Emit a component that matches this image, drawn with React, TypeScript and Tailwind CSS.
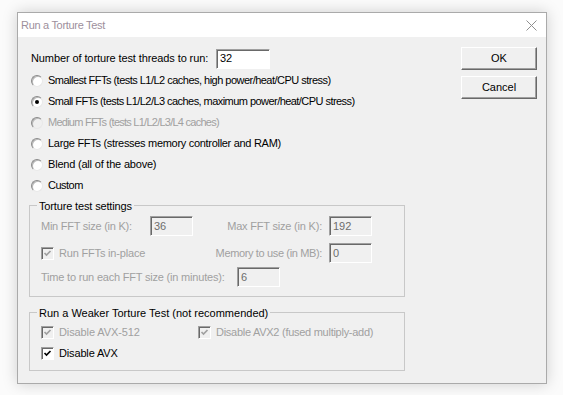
import React from "react";

const font = { fontFamily: '"Liberation Sans", Arial, sans-serif' };

function Radio({ checked = false, disabled = false }: { checked?: boolean; disabled?: boolean }) {
  return (
    <span
      className={`relative w-[12px] h-[12px] shrink-0 rounded-full border border-t-[#8a8a8a] border-l-[#8a8a8a] border-r-[#e8e8e8] border-b-[#e8e8e8] shadow-[inset_1px_1px_0_#b9b9b9] flex items-center justify-center ${
        disabled ? "bg-[#f0f0f0]" : "bg-white"
      }`}
    >
      {checked && <span className="w-[4px] h-[4px] rounded-full bg-black" />}
    </span>
  );
}

function Check({ checked = true, disabled = false }: { checked?: boolean; disabled?: boolean }) {
  return (
    <span
      className={`w-[13px] h-[13px] shrink-0 border border-t-[#a0a0a0] border-l-[#a0a0a0] border-r-white border-b-white shadow-[inset_1px_1px_0_#696969] flex items-center justify-center ${
        disabled ? "bg-[#f0f0f0]" : "bg-white"
      }`}
    >
      {checked && (
        <svg width="9" height="9" viewBox="0 0 9 9">
          <path d="M1.5 4 L3.5 6 L7.5 2" fill="none" stroke={disabled ? "#a0a0a0" : "#000"} strokeWidth="1.7" />
        </svg>
      )}
    </span>
  );
}

function Field({ value, disabled = false, w = "w-[43px]" }: { value: string; disabled?: boolean; w?: string }) {
  return (
    <div
      className={`${w} h-[20px] border border-t-[#a0a0a0] border-l-[#a0a0a0] border-r-white border-b-white shadow-[inset_1px_1px_0_#696969] pl-[3px] flex items-center text-[11px] ${
        disabled ? "bg-[#f0f0f0] text-[#6d6d6d]" : "bg-white text-black"
      }`}
    >
      {value}
    </div>
  );
}

function Btn({ label }: { label: string }) {
  return (
    <div className="w-[76px] h-[23px] bg-[#f0f0f0] border border-t-white border-l-white border-r-[#696969] border-b-[#696969] shadow-[inset_-1px_-1px_0_#a0a0a0] flex items-center justify-center text-[11px] text-black">
      {label}
    </div>
  );
}

export default function App() {
  // tracking per line so the widths match the old MS Sans Serif text
  const radios = [
    { label: "Smallest FFTs (tests L1/L2 caches, high power/heat/CPU stress)", track: "tracking-[-0.52px]" },
    { label: "Small FFTs (tests L1/L2/L3 caches, maximum power/heat/CPU stress)", track: "tracking-[-0.55px]", checked: true },
    { label: "Medium FFTs (tests L1/L2/L3/L4 caches)", track: "tracking-[-0.75px]", disabled: true },
    { label: "Large FFTs (stresses memory controller and RAM)", track: "tracking-[-0.3px]" },
    { label: "Blend (all of the above)", track: "tracking-[-0.2px]" },
    { label: "Custom", track: "tracking-[-0.5px]" },
  ];

  return (
    <div className="w-[563px] h-[395px] bg-[#fbfbfb] pt-[12px] pl-[17px] overflow-hidden" style={font}>
      <div className="w-[530px] h-[372px] border border-[#aaaaaa] bg-[#f0f0f0] shadow-[0_0_14px_rgba(0,0,0,0.18)] flex flex-col">
        {/* title bar */}
        <div className="h-[24px] bg-white flex items-center justify-between pl-[3px] pr-[9px]">
          <span className="text-[11px] tracking-[-0.3px] text-[#9d8f9c]">Run a Torture Test</span>
          <svg width="11" height="11" viewBox="0 0 11 11">
            <path d="M0.5 0.5 L10.5 10.5 M10.5 0.5 L0.5 10.5" stroke="#8f8f8f" strokeWidth="1" />
          </svg>
        </div>

        <div className="flex pl-[11px] pt-[10px]">
          <div className="w-[376px] flex flex-col text-[11px] text-black">
            <div className="h-[23px] pl-[2px] flex items-center">
              <span className="w-[185px] tracking-[-0.1px]">Number of torture test threads to run:</span>
              <Field value="32" w="w-[54px]" />
            </div>

            {radios.map((r) => (
              <div key={r.label} className={`h-[21px] pl-[2px] flex items-center gap-[5px] ${r.disabled ? "text-[#a0a0a0]" : ""}`}>
                <Radio checked={r.checked} disabled={r.disabled} />
                <span className={r.track}>{r.label}</span>
              </div>
            ))}

            {/* Torture test settings */}
            <div className="relative mt-[9px] h-[92px] border border-[#c8c8c8] pl-[11px] text-[#a0a0a0]">
              <span className="absolute -top-[8px] left-[7px] px-[2px] bg-[#f0f0f0] text-black tracking-[-0.15px]">Torture test settings</span>
              <div className="h-[20px] mt-[10px] flex items-center">
                <span className="w-[109px] tracking-[-0.25px]">Min FFT size (in K):</span>
                <Field value="36" disabled />
                <span className="w-[136px] text-right pr-[7px] tracking-[-0.2px]">Max FFT size (in K):</span>
                <Field value="192" disabled />
              </div>
              <div className="h-[20px] mt-[7px] flex items-center">
                <div className="w-[152px] flex items-center gap-[5px]">
                  <Check disabled />
                  <span className="tracking-[-0.18px]">Run FFTs in-place</span>
                </div>
                <span className="w-[136px] text-right pr-[7px] tracking-[-0.36px]">Memory to use (in MB):</span>
                <Field value="0" disabled />
              </div>
              <div className="h-[20px] mt-[4px] flex items-center">
                <span className="w-[196px] tracking-[-0.2px]">Time to run each FFT size (in minutes):</span>
                <Field value="6" disabled />
              </div>
            </div>

            {/* Weaker test */}
            <div className="relative mt-[15px] h-[59px] border border-[#c8c8c8] pl-[11px] text-[#a0a0a0]">
              <span className="absolute -top-[8px] left-[7px] px-[2px] bg-[#f0f0f0] text-black">Run a Weaker Torture Test (not recommended)</span>
              <div className="h-[16px] mt-[11px] flex items-center">
                <div className="w-[157px] flex items-center gap-[5px]">
                  <Check disabled />
                  <span className="tracking-[-0.1px]">Disable AVX-512</span>
                </div>
                <div className="flex items-center gap-[5px]">
                  <Check disabled />
                  <span className="tracking-[-0.27px]">Disable AVX2 (fused multiply-add)</span>
                </div>
              </div>
              <div className="h-[16px] mt-[5px] flex items-center gap-[5px] text-black">
                <Check />
                <span className="tracking-[-0.15px]">Disable AVX</span>
              </div>
            </div>
          </div>

          <div className="ml-[56px] flex flex-col gap-[6px]">
            <Btn label="OK" />
            <Btn label="Cancel" />
          </div>
        </div>
      </div>
    </div>
  );
}
